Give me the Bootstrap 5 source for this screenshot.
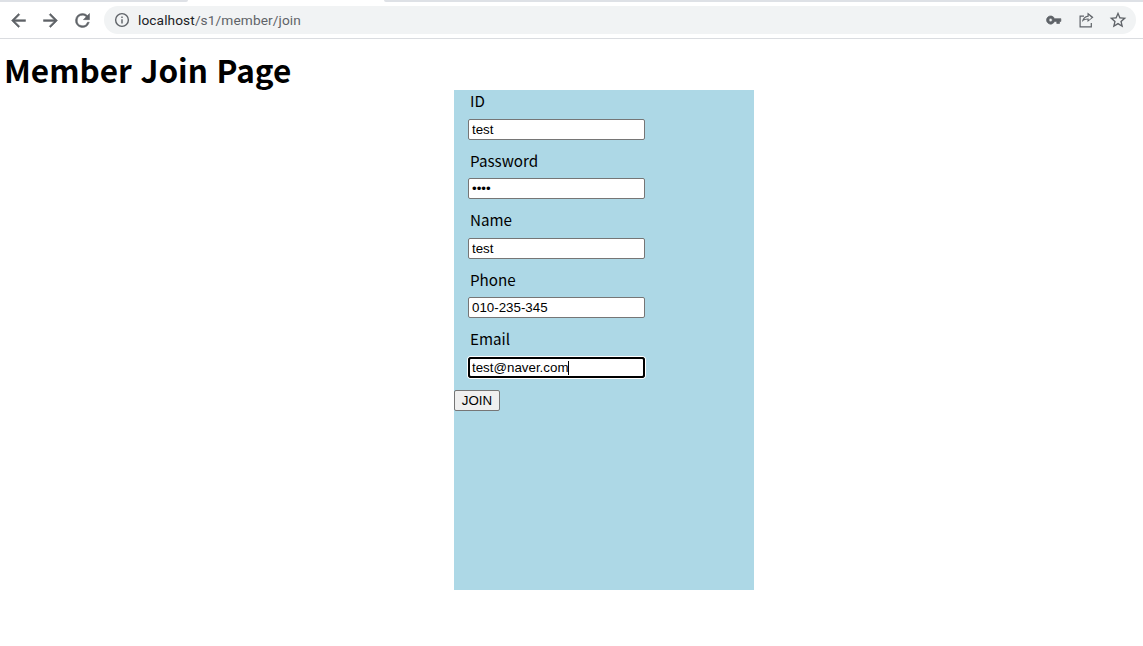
<!DOCTYPE html>
<html lang="en">
<head>
<meta charset="utf-8">
<title>Member Join Page</title>
<link href="https://cdn.jsdelivr.net/npm/bootstrap@5.3.0/dist/css/bootstrap.min.css" rel="stylesheet">
<style>
html,body{height:100%;overflow:hidden}
body{background:#fff;color:#000;font-family:"Noto Sans CJK KR","Noto Sans",sans-serif}
.tabstrip{height:3px;background:#fff}
.tabstrip i{display:block;height:2px;background:#dee1e6}
.tab-one{width:188px;border-radius:0 0 5px 0}
.tab-gap{width:196px;background:#fff!important}
.tab-rest{flex:1;border-radius:0 0 0 5px}
.toolbar{height:36px;border-bottom:1px solid #dadce0;padding-left:7.5px;padding-right:7px}
.tool{width:21px;height:21px;display:block;flex:none;fill:#5f6368;stroke:#5f6368;stroke-width:.6}
.tools{gap:11px;margin-right:11.5px}
.omnibox{height:28px;border-radius:14px;background:#f1f3f4;padding:0 8px;margin-top:-1px}
.url{font:13.7px "Roboto",sans-serif;color:#5f6368;margin-left:6px;letter-spacing:.1px}
.url b{font-weight:400;color:#202124}
.omni-end{gap:12px}
.omni-ic{width:20px;height:20px;flex:none;fill:#5f6368}
.key-ic{stroke:#5f6368;stroke-width:1}
.page-title{font-size:31.5px;line-height:38px;font-weight:700;margin:11px 0 0 4px;word-spacing:1.5px;padding-bottom:1px}
.panel{width:300px;height:500px;margin-left:454px;margin-top:1px;background:#add8e6}
.fld{padding-left:14px;height:59.5px}
.fld-label{display:block;font-size:15.2px;line-height:20px;padding-left:2px;margin:0 0 8.6px}
.fld-input{display:block;width:177px;height:21px;border:1px solid #767676;border-radius:2px;background:#fff;padding:1px 3px;font:13.33px/17px "Liberation Sans",sans-serif;color:#000;outline:0}
.fld-active{border-color:#000;outline:2px solid #000;outline-offset:-2px;box-shadow:0 0 0 1px #fff;border-radius:3px}
.caret-mark{position:absolute;left:100px;top:4px;width:1px;height:14px;background:#000}
.join-btn{display:block;width:46px;height:21px;padding:0;border:1px solid #767676;border-radius:2px;background:#efefef;color:#000;font:13.33px "Liberation Sans",sans-serif;margin-top:2.5px}
</style>
</head>
<body>
<div class="tabstrip d-flex"><i class="tab-one"></i><i class="tab-gap"></i><i class="tab-rest"></i></div>
<div class="toolbar d-flex align-items-center">
  <div class="tools d-flex align-items-center">
    <svg class="tool" viewBox="0 0 24 24"><path d="M20 11H7.83l5.59-5.59L12 4l-8 8 8 8 1.41-1.41L7.83 13H20z"/></svg>
    <svg class="tool" viewBox="0 0 24 24"><path d="M12 4l-1.41 1.41L16.17 11H4v2h12.17l-5.58 5.59L12 20l8-8z"/></svg>
    <svg class="tool" viewBox="0 0 24 24"><path d="M17.65 6.35A7.96 7.96 0 0 0 12 4a8 8 0 1 0 7.73 10h-2.08A6 6 0 1 1 12 6c1.66 0 3.14.69 4.22 1.78L13 11h7V4z"/></svg>
  </div>
  <div class="omnibox flex-grow-1 d-flex align-items-center">
    <svg class="omni-ic" viewBox="0 0 24 24"><path d="M11 7h2v2h-2zm0 4h2v6h-2zm1-9a10 10 0 1 0 0 20 10 10 0 0 0 0-20zm0 18a8 8 0 1 1 0-16 8 8 0 0 1 0 16z" transform="translate(1.8 1.8) scale(.85)"/></svg>
    <span class="url flex-grow-1"><b>localhost</b>/s1/member/join</span>
    <div class="omni-end d-flex align-items-center">
      <svg class="omni-ic key-ic" viewBox="0 0 24 24"><path d="M12.65 10A6 6 0 1 0 12.65 14H16v3h4v-3h2v-4zM7 14.5a2.5 2.5 0 1 1 0-5 2.5 2.5 0 0 1 0 5z" transform="translate(2.2 2.2) scale(.82)"/></svg>
      <svg class="omni-ic" viewBox="0 0 20 20"><path d="M3.5 5.5H8v1.2H4.7v9.6h10V13h1.2v4.5H3.5zM11.5 2.5l6 4.8-6 4.8V9.4c-2.6 0-4.3.9-5.6 2.9.3-3.4 2.2-6 5.6-6.6zm1.2 2.5v1.8c-2.2.1-3.6.9-4.5 2.5 1.2-.6 2.7-.9 4.5-.8v1.6l2.9-2.3z"/></svg>
      <svg class="omni-ic" viewBox="0 0 24 24"><path d="M22 9.24l-7.19-.62L12 2 9.19 8.63 2 9.24l5.46 4.73L5.82 21 12 17.27 18.18 21l-1.63-7.03zM12 15.4l-3.76 2.27 1-4.28-3.32-2.88 4.38-.38L12 6.1l1.71 4.04 4.38.38-3.32 2.88 1 4.28z"/></svg>
    </div>
  </div>
</div>
<h1 class="page-title">Member Join Page</h1>
<form class="panel">
  <div class="fld"><label class="fld-label" for="f1">ID</label><input class="fld-input" id="f1" type="text" value="test"></div>
  <div class="fld"><label class="fld-label" for="f2">Password</label><input class="fld-input" id="f2" type="password" value="test"></div>
  <div class="fld"><label class="fld-label" for="f3">Name</label><input class="fld-input" id="f3" type="text" value="test"></div>
  <div class="fld"><label class="fld-label" for="f4">Phone</label><input class="fld-input" id="f4" type="text" value="010-235-345"></div>
  <div class="fld"><label class="fld-label" for="f5">Email</label><div class="position-relative"><input class="fld-input fld-active" id="f5" type="text" value="test@naver.com"><span class="caret-mark"></span></div></div>
  <button class="join-btn" type="button">JOIN</button>
</form>
<script src="https://cdn.jsdelivr.net/npm/bootstrap@5.3.0/dist/js/bootstrap.bundle.min.js"></script>
</body>
</html>
